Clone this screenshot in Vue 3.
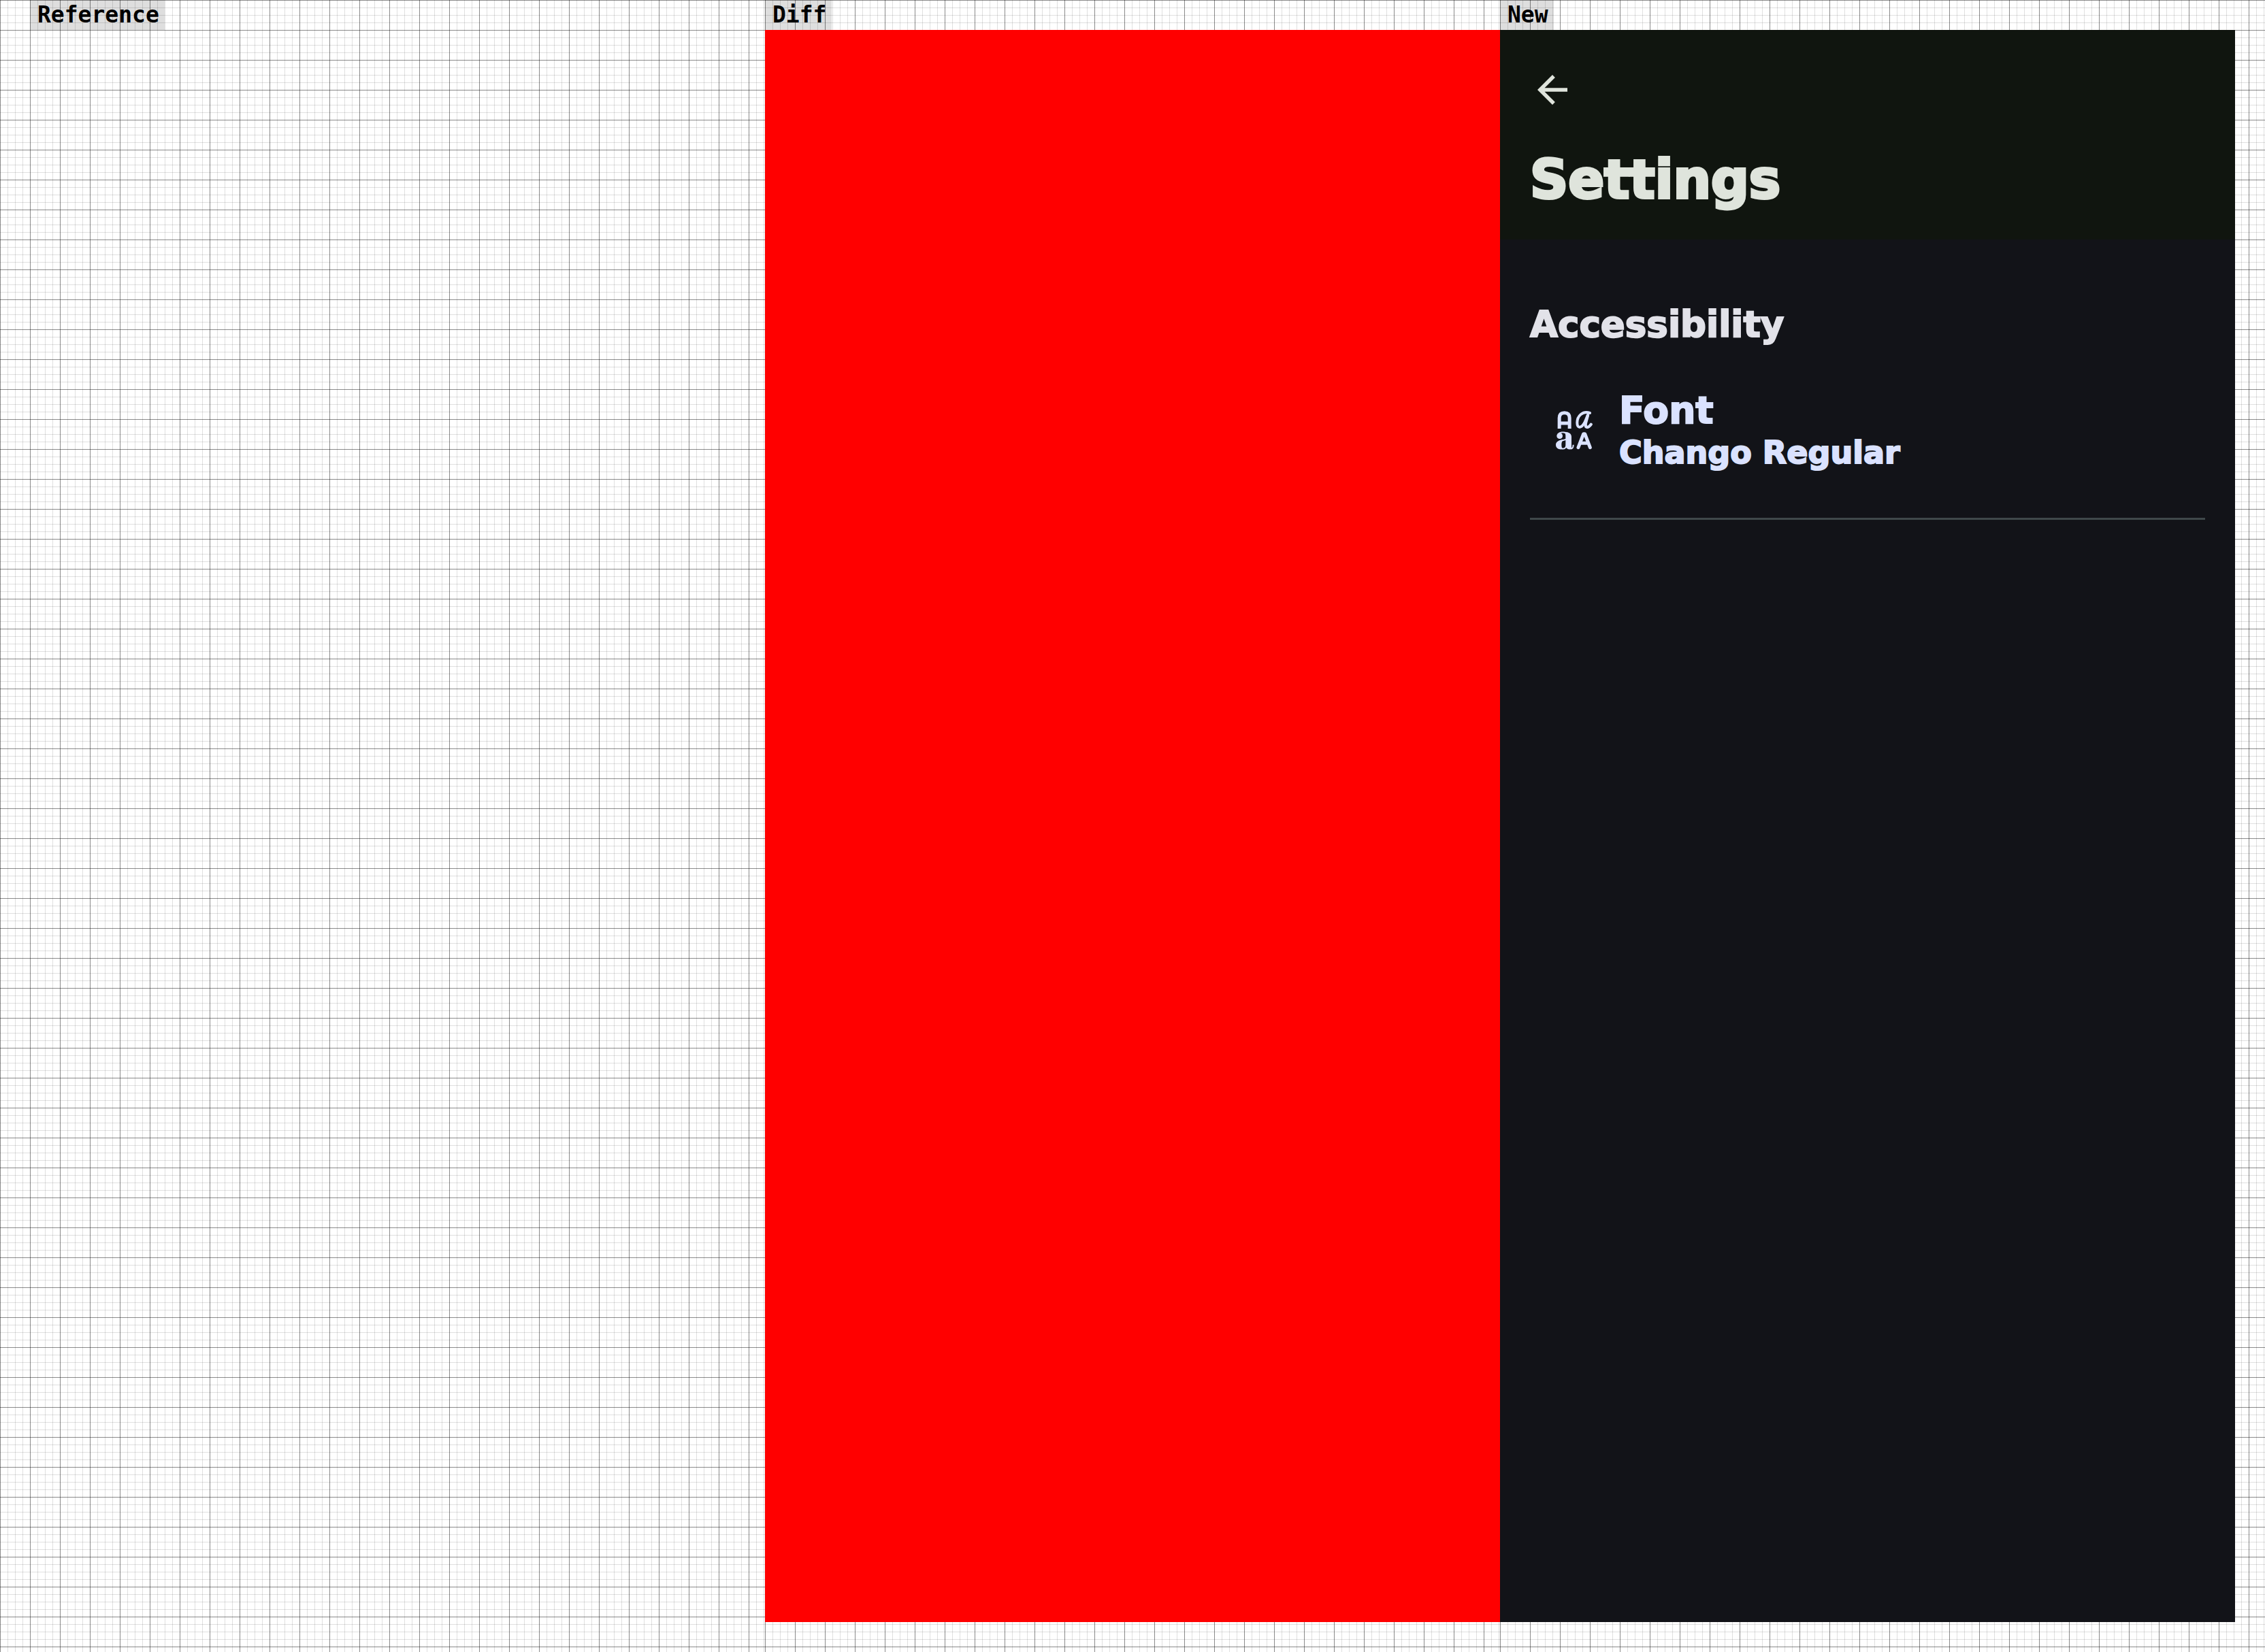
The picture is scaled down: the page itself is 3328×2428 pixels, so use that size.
<script setup>
const heading = 'Settings'
const section = 'Accessibility'
const preference = { title: 'Font', value: 'Chango Regular' }
</script>

<template>
  <main class="board">
    <section class="column">
      <h2 class="label">Reference</h2>
      <div class="pane"></div>
    </section>

    <section class="column">
      <h2 class="label">Diff</h2>
      <div class="pane changed"></div>
    </section>

    <section class="column">
      <h2 class="label">New</h2>
      <div class="pane screen">
        <header class="topbar">
          <button class="back" type="button" aria-label="Back">
            <svg viewBox="0 0 24 24" aria-hidden="true">
              <path d="M20 11H7.83l5.59-5.59L12 4l-8 8 8 8 1.41-1.41L7.83 13H20v-2z" />
            </svg>
          </button>
          <h1 class="title">{{ heading }}</h1>
        </header>

        <div class="content">
          <h2 class="section">{{ section }}</h2>
          <button class="preference" type="button">
            <svg class="icon" viewBox="49 44 162 171" aria-hidden="true">
              <g fill="none" stroke="currentColor" stroke-width="15">
                <path d="M64.500 122V75Q64.500 52 87 52T109.500 75V122M63 98H111" />
                <g stroke-linecap="round" stroke-linejoin="round">
                  <path stroke-width="12" d="M199 53C168 42 143 66 143 96C143 123 162 120 176 95L190 62" />
                  <path stroke-width="13" d="M190 63L181 96C176 119 190 122 204 103" />
                  <path d="M148 205L171 145H177L200 205M158 186H190" />
                </g>
                <path stroke-width="6" d="M59 147C66 137 82 137 94 141M94 169C86 174 76 172 70 177M76 210C86 213 93 205 96 197M108 205C117 216 126 208 126 193" />
              </g>
              <g fill="currentColor">
                <circle cx="66" cy="154" r="13" />
                <path d="M78 137C104 134 118 143 118 158V202C118 208 119 209 122 210C111 217 95 213 92 200V154C92 145 90 140 78 137Z" />
                <path d="M84 170C75 178 74 185 74 193C74 203 76 209 82 211C67 217 49 210 49 194C49 180 62 172 84 170Z" />
              </g>
            </svg>
            <span class="copy">
              <span class="name">{{ preference.title }}</span>
              <span class="value">{{ preference.value }}</span>
            </span>
          </button>
          <hr class="divider" />
        </div>
      </div>
    </section>
  </main>
</template>

<style>
body {
  margin: 0;
}
</style>

<style scoped>
.board {
  display: flex;
  min-height: 100vh;
}

/* Every column carries its own graph paper, starting at its left edge. */
.column {
  display: flex;
  flex: 1 1 0;
  flex-direction: column;
  align-items: flex-start;
  min-width: 0;
  padding-bottom: 44px;
  background-color: #fff;
  background-image:
    linear-gradient(to right, rgba(0, 0, 0, 0.38) 1px, transparent 1px),
    linear-gradient(to bottom, rgba(0, 0, 0, 0.38) 1px, transparent 1px),
    linear-gradient(to right, rgba(0, 0, 0, 0.12) 1px, transparent 1px),
    linear-gradient(to bottom, rgba(0, 0, 0, 0.12) 1px, transparent 1px);
  background-size: 44px 44px, 44px 44px, 11px 11px, 11px 11px;
}

.column:first-child {
  padding-left: 44px;
}

.column:last-child {
  padding-right: 44px;
}

.label {
  margin: 0;
  padding: 0 8px 0 11px;
  background: rgba(0, 0, 0, 0.13);
  color: #000;
  font: bold 33px/44px "DejaVu Sans Mono", monospace;
}

.pane {
  flex: 1;
  width: 100%;
}

.changed {
  background: #f00;
}

.screen {
  background: #121318;
  font-family: "DejaVu Sans", sans-serif;
  font-weight: 700;
  -webkit-text-stroke: 2px currentColor;
}

.topbar {
  padding: 55px 44px 44px;
  background: #10150f;
  color: #dfe4dc;
}

.back {
  display: block;
  width: 66px;
  height: 66px;
  padding: 0;
  border: 0;
  background: none;
  color: inherit;
}

.back svg {
  display: block;
  width: 100%;
  height: 100%;
  fill: currentColor;
}

.title {
  margin: 55px 0 0;
  font-size: 78px;
  line-height: 88px;
  -webkit-text-stroke-width: 4px;
}

.content {
  padding: 92px 44px 44px;
}

.section {
  margin: 0;
  color: #e2e2e9;
  font-size: 53px;
  line-height: 66px;
}

.preference {
  display: flex;
  align-items: center;
  gap: 39px;
  width: 100%;
  margin: 0;
  padding: 60px 38px 67px;
  border: 0;
  background: none;
  color: #dae2ff;
  font: inherit;
  text-align: left;
}

.icon {
  flex: none;
  width: 54px;
  height: 57px;
}

.copy {
  display: flex;
  flex-direction: column;
}

.name {
  font-size: 55px;
  line-height: 66px;
}

.value {
  font-size: 46px;
  line-height: 58px;
}

.divider {
  height: 3px;
  margin: 0;
  border: 0;
  background: #3f484a;
}
</style>
